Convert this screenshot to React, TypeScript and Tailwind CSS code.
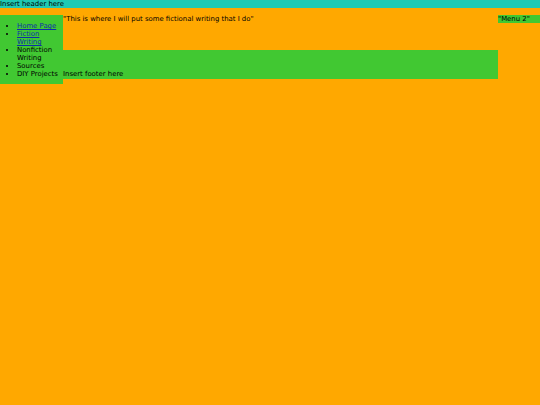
export default function App() {
  return (
    <div
      className="w-[540px] h-[405px] bg-[#ffa800] text-black text-[6.9px] leading-[8px]"
      style={{ fontFamily: '"DejaVu Sans", Verdana, sans-serif' }}
    >
      <div className="h-[8px] bg-[#1fcab4]">Insert header here</div>
      <div className="flex mt-[7px] items-start">
        <nav className="w-[63px] bg-[#41c832] pt-[7px] pb-[6px]">
          <ul className="list-disc pl-[17px]">
            <li>
              <a href="#" className="underline text-[#0d2fa8]">Home Page</a>
            </li>
            <li>
              <a href="#" className="underline text-[#0d2fa8]">Fiction Writing</a>
            </li>
            <li>Nonfiction Writing</li>
            <li>Sources</li>
            <li>DIY Projects</li>
          </ul>
        </nav>
        <div className="w-[435px] flex flex-col">
          <div className="h-[35px]">"This is where I will put some fictional writing that I do"</div>
          <footer className="h-[29px] bg-[#41c832] flex items-end pb-[1px]">Insert footer here</footer>
        </div>
        <div className="w-[42px]">
          <div className="bg-[#41c832] h-[8px]">"Menu 2"</div>
        </div>
      </div>
    </div>
  );
}
